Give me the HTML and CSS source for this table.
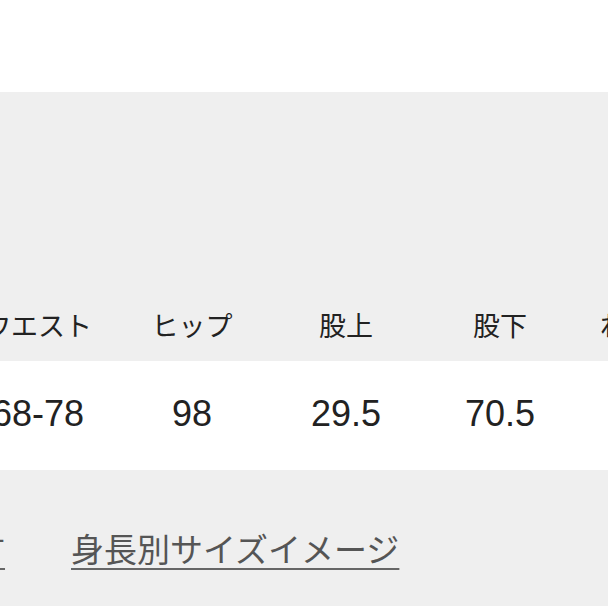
FILE: index.html
```html
<!DOCTYPE html>
<html lang="ja">
<head>
<meta charset="utf-8">
<link rel="stylesheet" href="styles.css">
</head>
<body>
<div class="page">
  <div class="top"></div>
  <div class="table">
    <div class="row head">
      <div class="cell">ウエスト</div>
      <div class="cell">ヒップ</div>
      <div class="cell">股上</div>
      <div class="cell">股下</div>
      <div class="cell">わたり幅</div>
    </div>
    <div class="row data">
      <div class="cell">68-78</div>
      <div class="cell">98</div>
      <div class="cell">29.5</div>
      <div class="cell">70.5</div>
      <div class="cell">33</div>
    </div>
  </div>
  <div class="links">
    <a class="link first" href="#">サイズの測り方</a>
    <a class="link" href="#">身長別サイズイメージ</a>
  </div>
  <div class="bottom"></div>
</div>
</body>
</html>
```

FILE: styles.css
```css
html, body {
  margin: 0;
  padding: 0;
  background: #ffffff;
}
.page {
  width: 608px;
  height: 608px;
  overflow: hidden;
  display: flex;
  flex-direction: column;
}
.top {
  height: 92px;
  flex: none;
  background: #ffffff;
}
.table {
  flex: none;
  display: flex;
  flex-direction: column;
}
.row {
  display: grid;
  grid-template-columns: repeat(5, 154px);
  margin-left: -39px;
  width: 770px;
}
.cell {
  text-align: center;
  white-space: nowrap;
  color: #222222;
  line-height: 1;
}
.head {
  height: 269px;
  background: #efefef;
  align-items: end;
  box-sizing: border-box;
  padding-bottom: 23px;
}
.head .cell {
  font-family: "Noto Sans CJK JP", "Noto Sans", sans-serif;
  font-size: 27px;
  font-weight: 400;
}
.data {
  height: 109px;
  background: #ffffff;
  align-items: center;
  box-sizing: border-box;
  padding-bottom: 4px;
}
.data .cell {
  font-family: "Liberation Sans", Arial, sans-serif;
  font-size: 36px;
}
.links {
  height: 136px;
  flex: none;
  background: #efefef;
  display: flex;
  align-items: center;
  gap: 66px;
  box-sizing: border-box;
  padding-top: 20px;
  white-space: nowrap;
}
.link {
  font-family: "Noto Sans CJK JP", "Noto Sans", sans-serif;
  font-size: 33px;
  line-height: 1;
  color: #555555;
  text-decoration: underline;
  text-decoration-color: #666666;
  text-decoration-thickness: 2px;
  text-underline-offset: 6px;
}
.first {
  margin-left: -225px;
}
.bottom {
  flex: 1;
  background: #ffffff;
}
```
